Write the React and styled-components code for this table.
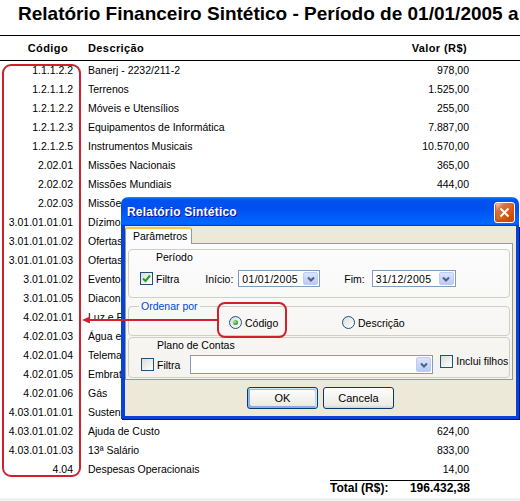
import React from 'react'
import styled, { createGlobalStyle } from 'styled-components'

const GlobalStyle = createGlobalStyle`
    html, body {
        margin: 0;
        padding: 0;
        background: #ffffff;
    }
    body {
        font-family: "Liberation Sans", Arial, sans-serif;
        overflow: hidden;
    }
`

const Page = styled.div`
    position: relative;
    width: 520px;
    height: 501px;
    overflow: hidden;
    display: flex;
    flex-direction: column;
    color: #000;
`

const Title = styled.h1`
    margin: 0 0 7px 0;
    padding-left: 18px;
    height: 28px;
    font-size: 19px;
    line-height: 28px;
    font-weight: bold;
    white-space: nowrap;
`

const Table = styled.div`
    border-top: 1px solid #000;
`

const HeadRow = styled.div`
    display: grid;
    grid-template-columns: 76px 1fr 140px;
    height: 24px;
    align-items: center;
    border-bottom: 1px solid #000;
    font-size: 11px;
    font-weight: bold;
    letter-spacing: 0.4px;
`

const HeadCell = styled.span`
    text-align: ${props => props.align || 'left'};
    padding-left: ${props => props.pl || 0}px;
    padding-right: ${props => props.pr || 0}px;
`

const Row = styled.div`
    display: grid;
    grid-template-columns: 76px 1fr 140px;
    height: 19px;
    line-height: 19px;
    font-size: 10.5px;
    white-space: nowrap;
`

const Code = styled.span`
    text-align: right;
    padding-right: 3px;
`

const Desc = styled.span`
    padding-left: 12px;
    overflow: hidden;
`

const Value = styled.span`
    text-align: right;
    padding-right: 51px;
`

const TotalWrap = styled.div`
    display: flex;
    justify-content: flex-end;
    padding-right: 50px;
    margin-top: 1px;
`

const TotalBox = styled.div`
    width: 140px;
    display: flex;
    justify-content: space-between;
    border-top: 1px solid #000;
    font-size: 12px;
    font-weight: bold;
    line-height: 15px;
`

const Spacer = styled.div`
    flex: 1;
`

const BottomStrip = styled.div`
    height: 3px;
    background: #f1f1f1;
`

/* dialog window, floats over the report */
const Dialog = styled.div`
    position: absolute;
    left: 121px;
    top: 197px;
    width: 398px;
    height: 222px;
    display: flex;
    flex-direction: column;
    font-size: 10.5px;
    z-index: 2;
`

const TitleBar = styled.div`
    height: 29px;
    flex-shrink: 0;
    border-radius: 7px 7px 0 0;
    background: linear-gradient(180deg, #0997ff, #0053ee 8%, #0050ee 40%, #0066ff 88%, #0066ff 93%, #005bff 95%, #003dd7 96%, #003dd7);
    display: flex;
    align-items: center;
    justify-content: space-between;
    padding: 1px 4px 0 6px;
    box-sizing: border-box;
`

const TitleText = styled.span`
    color: #fff;
    font-size: 12px;
    font-weight: bold;
    letter-spacing: 0.2px;
    text-shadow: 1px 1px #0f1089;
`

const CloseBtn = styled.div`
    width: 21px;
    height: 21px;
    box-sizing: border-box;
    border: 1px solid #fff;
    border-radius: 3px;
    background-image: radial-gradient(circle at 90% 90%, #cc4600 0, #dc6527 55%, #cd7546 70%, #ffccb2 90%, #fff 100%);
    box-shadow: inset 0 -1px 2px 1px #da4600;
    display: flex;
    align-items: center;
    justify-content: center;
`

const Body = styled.div`
    flex: 1;
    background: #ece9d8;
    border-style: solid;
    border-color: #0842d8;
    border-width: 0 3px 3px 4px;
    box-shadow: 1px 1px 0 #00138c;
    display: flex;
    flex-direction: column;
    padding: 1px 3px 0 0;
`

const TabStrip = styled.div`
    display: flex;
    height: 16px;
    position: relative;
    z-index: 1;
`

const Tab = styled.div`
    width: 67px;
    box-sizing: border-box;
    border: 1px solid #919b9c;
    border-bottom: none;
    border-top: 2px solid #ffc83c;
    border-radius: 3px 3px 0 0;
    background: #fcfcfe;
    padding-left: 7px;
    line-height: 14px;
    height: 17px;
`

const Panel = styled.div`
    border: 1px solid #919b9c;
    background: linear-gradient(180deg, #fcfcfe, #f4f3ee);
    padding: 5px 2px 1px 2px;
    display: flex;
    flex-direction: column;
`

const Group = styled.div`
    border: 1px solid #d0d0bf;
    border-radius: 4px;
    display: flex;
    flex-direction: column;
    margin-top: ${props => props.mt || 0}px;
    padding: ${props => props.pad};
`

const Legend = styled.span`
    align-self: flex-start;
    color: ${props => props.blue ? '#0046d5' : '#000'};
    background: ${props => props.overBorder ? '#f8f8f5' : 'transparent'};
    margin: ${props => props.overBorder ? '-7px 0 0 -90px' : '0 0 0 14px'};
    padding: 0 2px;
    line-height: 13px;
`

const FieldRow = styled.div`
    display: flex;
    align-items: center;
    margin-top: ${props => props.mt || 0}px;
`

const CheckBox = styled.span`
    width: 13px;
    height: 13px;
    box-sizing: border-box;
    border: 1px solid #1c5180;
    background: linear-gradient(135deg, #dcdcd7, #ffffff);
    display: inline-flex;
    align-items: center;
    justify-content: center;
    flex-shrink: 0;
    margin-left: ${props => props.ml || 0}px;
    align-self: ${props => props.raised ? 'flex-start' : 'center'};
`

const Radio = styled.span`
    width: 13px;
    height: 13px;
    box-sizing: border-box;
    border: 1px solid #1c5180;
    border-radius: 50%;
    background: linear-gradient(135deg, #dcdcd7, #ffffff);
    display: inline-flex;
    align-items: center;
    justify-content: center;
    flex-shrink: 0;

    &::after {
        content: '';
        display: ${props => props.checked ? 'block' : 'none'};
        width: 5px;
        height: 5px;
        border-radius: 50%;
        background: radial-gradient(circle at 35% 35%, #a6eca6, #21a121 70%);
    }
`

const Label = styled.span`
    margin-left: ${props => props.ml || 3}px;
    white-space: nowrap;
    align-self: ${props => props.raised ? 'flex-start' : 'center'};
`

const Choice = styled.div`
    display: flex;
    align-items: center;
    width: ${props => props.w ? props.w + 'px' : 'auto'};
`

const Combo = styled.div`
    width: ${props => props.w}px;
    height: ${props => props.h || 17}px;
    box-sizing: border-box;
    border: 1px solid #7f9db9;
    background: #fff;
    display: flex;
    align-items: stretch;
    margin-left: ${props => props.ml || 0}px;
`

const ComboText = styled.span`
    flex: 1;
    padding-left: 3px;
    display: flex;
    align-items: center;
    letter-spacing: 0.3px;
`

const DropBtn = styled.span`
    width: 15px;
    margin: 1px;
    border-radius: 2px;
    background: linear-gradient(180deg, #dbe5fc, #b7cbf7);
    border: 1px solid #bccdf5;
    box-sizing: border-box;
    display: flex;
    align-items: center;
    justify-content: center;
`

const Buttons = styled.div`
    display: flex;
    justify-content: center;
    gap: 5px;
    padding-top: 7px;
    padding-left: 3px;
`

const Button = styled.div`
    width: 71px;
    height: 22px;
    box-sizing: border-box;
    border: 1px solid #003c74;
    border-radius: 3px;
    background: linear-gradient(180deg, #fff, #ecebe6 86%, #d6d0c5);
    display: flex;
    align-items: center;
    justify-content: center;
    font-size: 11px;
    box-shadow: ${props => props.focused
        ? 'inset -1px 1px #cee7ff, inset 1px 2px #98b8ea, inset -2px 2px #bcd4f6, inset 1px -1px #89ade4, inset 2px -2px #89ade4'
        : 'none'};
`

const Annotations = styled.svg`
    position: absolute;
    left: 0;
    top: 0;
    z-index: 3;
    pointer-events: none;
`

const rows = [
    ['1.1.1.2.2', 'Banerj - 2232/211-2', '978,00'],
    ['1.2.1.1.2', 'Terrenos', '1.525,00'],
    ['1.2.1.2.2', 'Móveis e Utensílios', '255,00'],
    ['1.2.1.2.3', 'Equipamentos de Informática', '7.887,00'],
    ['1.2.1.2.5', 'Instrumentos Musicais', '10.570,00'],
    ['2.02.01', 'Missões Nacionais', '365,00'],
    ['2.02.02', 'Missões Mundiais', '444,00'],
    ['2.02.03', 'Missões Estaduais', '380,00'],
    ['3.01.01.01.01', 'Dízimos', '98.450,00'],
    ['3.01.01.01.02', 'Ofertas Alçadas', '12.300,00'],
    ['3.01.01.01.03', 'Ofertas Missionárias', '6.120,00'],
    ['3.01.01.02', 'Eventos', '4.800,00'],
    ['3.01.01.05', 'Diaconia', '2.150,00'],
    ['4.02.01.01', 'Luz e Força', '1.932,38'],
    ['4.02.01.03', 'Água e Esgoto', '640,00'],
    ['4.02.01.04', 'Telemar', '1.210,00'],
    ['4.02.01.05', 'Embratel', '480,00'],
    ['4.02.01.06', 'Gás', '95,00'],
    ['4.03.01.01.01', 'Sustento Pastoral', '42.000,00'],
    ['4.03.01.01.02', 'Ajuda de Custo', '624,00'],
    ['4.03.01.01.03', '13ª Salário', '833,00'],
    ['4.04', 'Despesas Operacionais', '14,00'],
]

const Check = () => (
    <svg width="9" height="9" viewBox="0 0 9 9">
        <polyline points="1,4.5 3.5,7 8,1.5" fill="none" stroke="#21a121" strokeWidth="2" />
    </svg>
)

const Chevron = () => (
    <svg width="8" height="6" viewBox="0 0 8 6">
        <polyline points="1,1.5 4,4.5 7,1.5" fill="none" stroke="#4d6185" strokeWidth="2" />
    </svg>
)

const DateCombo = ({ value, w, ml }) => (
    <Combo w={w} ml={ml}>
        <ComboText>{value}</ComboText>
        <DropBtn><Chevron /></DropBtn>
    </Combo>
)

const App = () => {
    return (
        <Page>
            <GlobalStyle />
            <Title>Relatório Financeiro Sintético - Período de 01/01/2005 a 31/12/2005</Title>
            <Table>
                <HeadRow>
                    <HeadCell align="right" pr={8}>Código</HeadCell>
                    <HeadCell pl={12}>Descrição</HeadCell>
                    <HeadCell align="right" pr={53}>Valor (R$)</HeadCell>
                </HeadRow>
                {rows.map(([code, desc, value]) => (
                    <Row key={code}>
                        <Code>{code}</Code>
                        <Desc>{desc}</Desc>
                        <Value>{value}</Value>
                    </Row>
                ))}
            </Table>
            <TotalWrap>
                <TotalBox>
                    <span>Total (R$):</span>
                    <span>196.432,38</span>
                </TotalBox>
            </TotalWrap>
            <Spacer />
            <BottomStrip />

            <Dialog>
                <TitleBar>
                    <TitleText>Relatório Sintético</TitleText>
                    <CloseBtn>
                        <svg width="11" height="11" viewBox="0 0 11 11">
                            <path d="M1.5 1.5 L9.5 9.5 M9.5 1.5 L1.5 9.5" stroke="#fff" strokeWidth="2" />
                        </svg>
                    </CloseBtn>
                </TitleBar>
                <Body>
                    <TabStrip>
                        <Tab>Parâmetros</Tab>
                    </TabStrip>
                    <Panel>
                        <Group pad="1px 0 10px 11px">
                            <Legend>Período</Legend>
                            <FieldRow mt={6}>
                                <CheckBox><Check /></CheckBox>
                                <Label>Filtra</Label>
                                <Label ml={26}>Início:</Label>
                                <DateCombo value="01/01/2005" w={82} ml={5} />
                                <Label ml={24}>Fim:</Label>
                                <DateCombo value="31/12/2005" w={84} ml={7} />
                            </FieldRow>
                        </Group>
                        <Group mt={8} pad="0 0 6px 100px">
                            <Legend blue overBorder>Ordenar por</Legend>
                            <FieldRow mt={3}>
                                <Choice w={113}>
                                    <Radio checked />
                                    <Label>Código</Label>
                                </Choice>
                                <Choice>
                                    <Radio />
                                    <Label>Descrição</Label>
                                </Choice>
                            </FieldRow>
                        </Group>
                        <Group mt={1} pad="1px 0 3px 12px">
                            <Legend>Plano de Contas</Legend>
                            <FieldRow mt={3}>
                                <CheckBox />
                                <Label>Filtra</Label>
                                <Combo w={243} h={19} ml={10}>
                                    <ComboText />
                                    <DropBtn><Chevron /></DropBtn>
                                </Combo>
                                <CheckBox ml={7} raised />
                                <Label raised>Inclui filhos</Label>
                            </FieldRow>
                        </Group>
                    </Panel>
                    <Buttons>
                        <Button focused>OK</Button>
                        <Button>Cancela</Button>
                    </Buttons>
                </Body>
            </Dialog>

            <Annotations width="520" height="501" viewBox="0 0 520 501">
                <rect x="3" y="65" width="77" height="411" rx="8" fill="none" stroke="#d0202e" strokeWidth="2" />
                <rect x="218" y="303" width="68" height="34" rx="7" fill="none" stroke="#d0202e" strokeWidth="2" />
                <line x1="88" y1="320" x2="218" y2="320" stroke="#d0202e" strokeWidth="2" />
                <polygon points="82,320 90,316.5 90,323.5" fill="#d0202e" />
            </Annotations>
        </Page>
    )
}

export default App
